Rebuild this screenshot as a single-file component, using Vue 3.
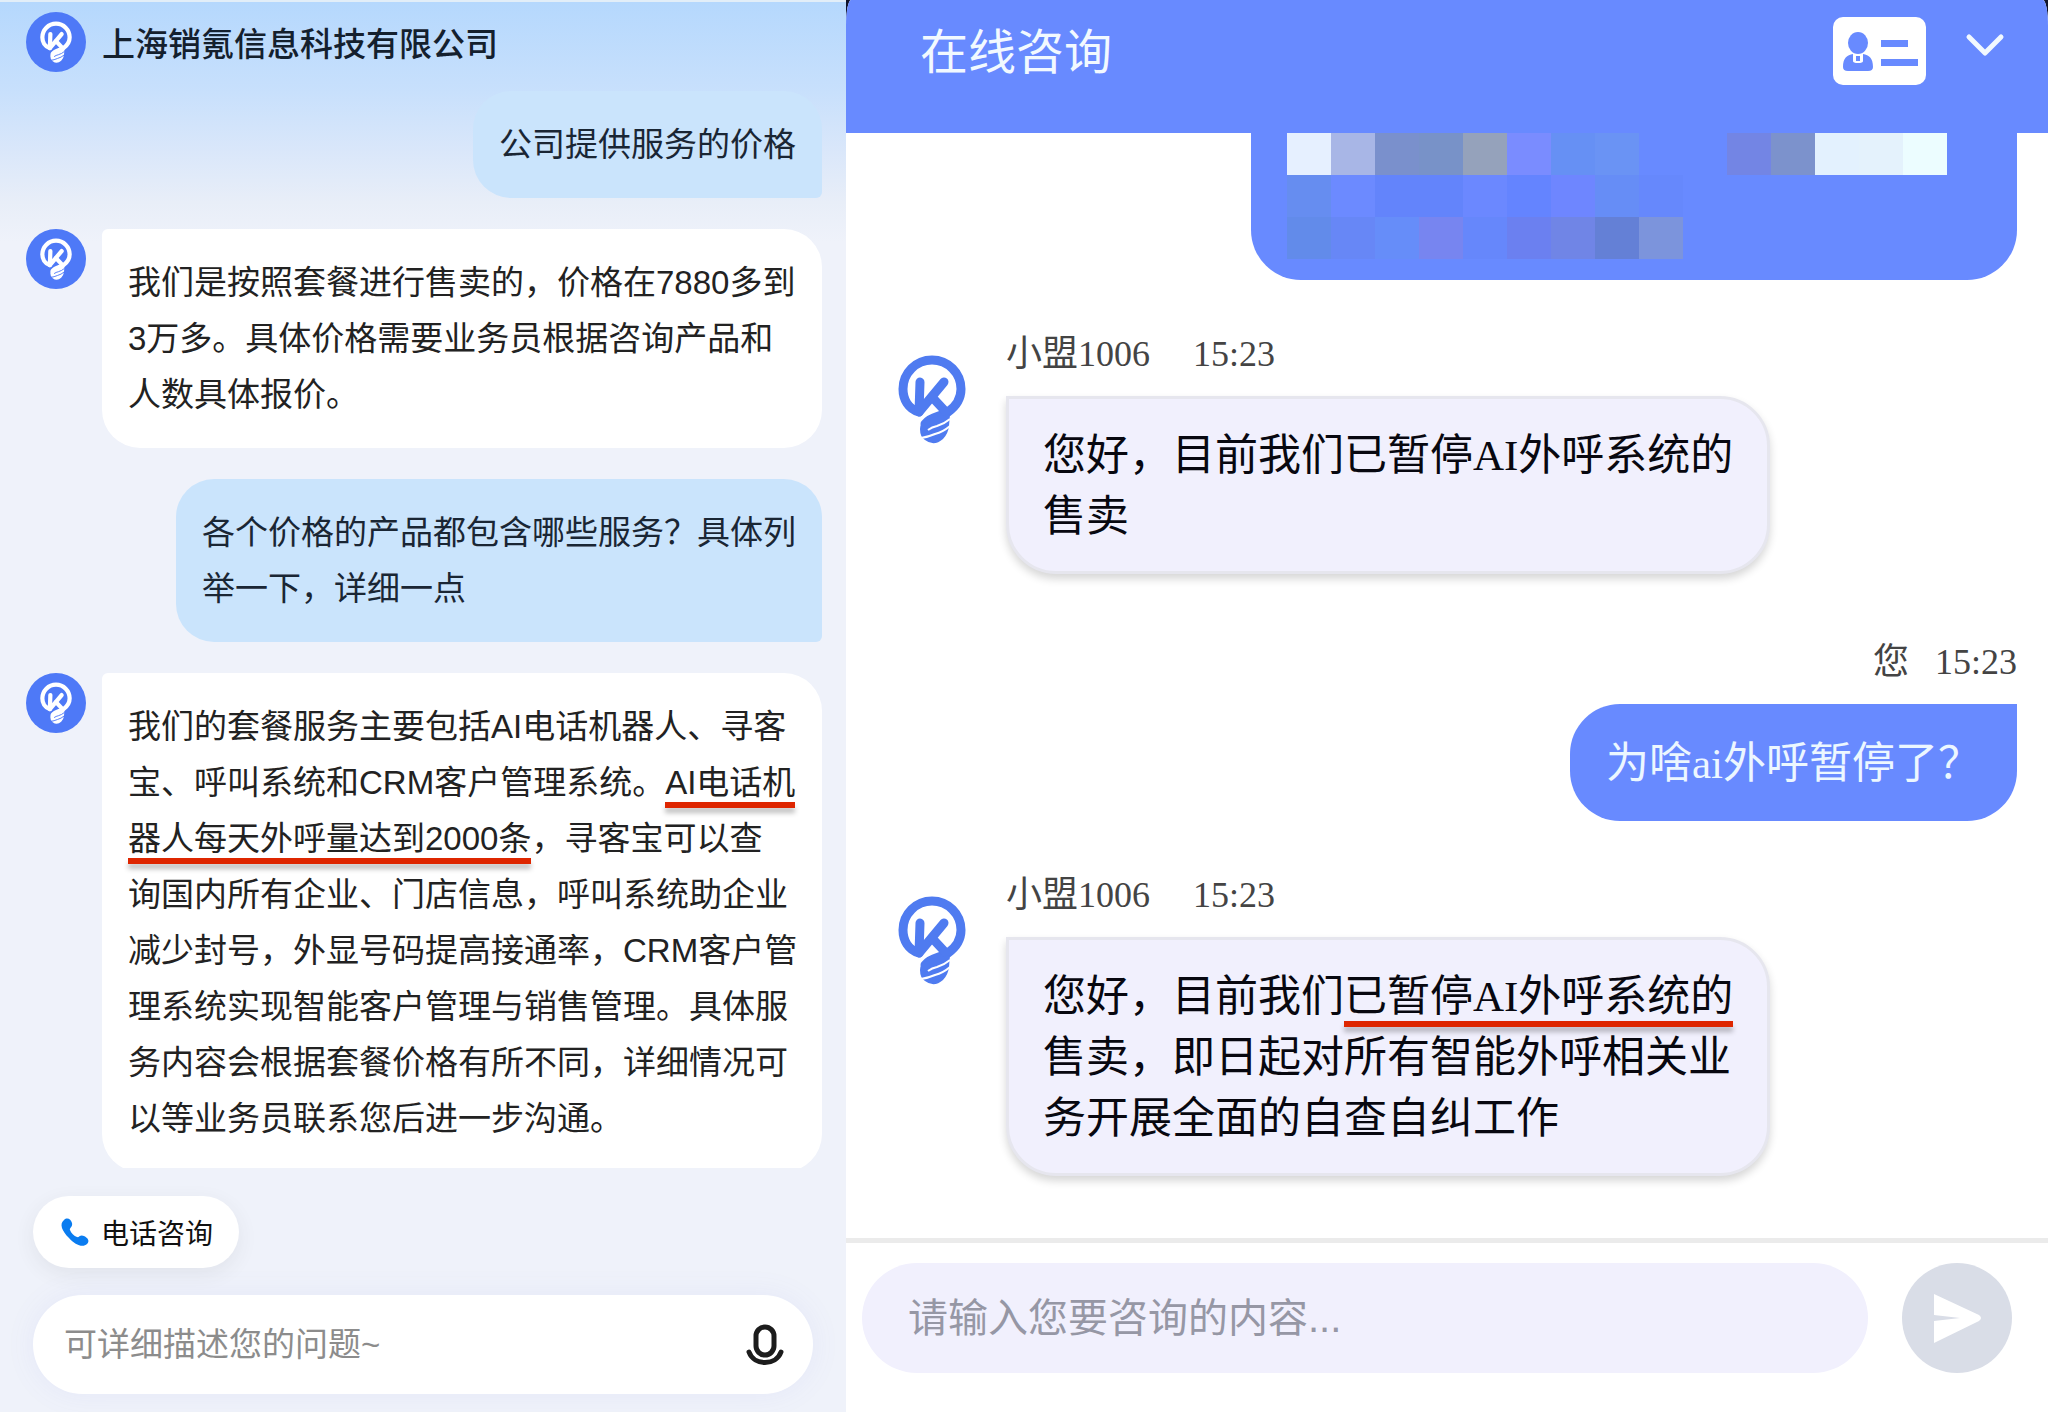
<template>
    <div class="page">
        <svg class="symbols" aria-hidden="true">
            <symbol id="bulb" viewBox="0 0 68 90">
                <g fill="none" stroke="currentColor" stroke-width="9" stroke-linecap="round" stroke-linejoin="round">
                    <path d="M21 57 C10 54 5 44 5 34 A29 29 0 0 1 63 34 C63 45 57 52 50 57 C43 62 33 61 27 69" />
                    <path d="M22 27 L21 57 L46 27" />
                    <path d="M34 42 L48 57" />
                </g>
                <path fill="currentColor" d="M22 74 C22 66 30 64 38 62 L52 59 L51 71 Q50 79 45 84 Q36 92 27 85 Q22 82 22 74Z" />
                <path class="stripe" d="M30 75 Q34 72 39 71 Q46 69 52 64" />
                <path class="stripe" d="M23 83 Q30 82 37 79 Q45 77 52 71" />
            </symbol>
        </svg>

        <section class="panel assistant">
            <header class="assistant-header">
                <span class="avatar"><svg class="avatar-logo"><use href="#bulb" /></svg></span>
                <h1 class="company">上海销氪信息科技有限公司</h1>
            </header>

            <main class="assistant-chat">
                <div v-for="(message, i) in assistantMessages" :key="i" class="row" :class="message.from">
                    <span v-if="message.from === 'bot'" class="avatar">
                        <svg class="avatar-logo"><use href="#bulb" /></svg>
                    </span>
                    <p class="bubble">
                        <span v-for="(part, j) in message.parts" :key="j" :class="{ marked: part.marked }">{{ part.text }}</span>
                    </p>
                </div>
            </main>

            <footer class="assistant-footer">
                <button type="button" class="phone-button">
                    <svg class="phone-icon" viewBox="0 0 28 28">
                        <path d="M3 2 C6 -1 10 1 11 5 C12 9 8 10 9 12 C10 15 13 18 16 19 C18 20 19 16 23 18 C27 20 29 23 26 26 C22 30 14 27 8 20 C1 13 -2 6 3 2Z" />
                    </svg>
                    电话咨询
                </button>
                <div class="ask-box">
                    <input v-model="question" class="ask-input" type="text" placeholder="可详细描述您的问题~" aria-label="问题" />
                    <button type="button" class="mic-button" aria-label="语音输入">
                        <svg class="mic-icon" viewBox="0 0 38 42">
                            <rect x="10" y="3" width="18" height="28" rx="9" />
                            <path d="M3 28 C8 42 30 42 35 28" />
                        </svg>
                    </button>
                </div>
            </footer>
        </section>

        <section class="panel online">
            <header class="online-header">
                <h2 class="online-title">在线咨询</h2>
                <button type="button" class="icon-button" aria-label="名片">
                    <svg class="card-icon" viewBox="0 0 93 68">
                        <rect width="93" height="68" rx="10" fill="#fff" />
                        <g fill="#688aff">
                            <ellipse cx="25" cy="26" rx="10" ry="11" />
                            <path d="M10 50 C10 41 14 38 20 37 V44 Q20 46 25 46 Q30 46 30 44 V37 C36 38 40 41 40 50 Q40 54 35 54 H15 Q10 54 10 50Z" />
                            <rect x="23" y="39" width="4" height="5" />
                            <rect x="48" y="23" width="27" height="7" />
                            <rect x="48" y="42" width="37" height="7" />
                        </g>
                    </svg>
                </button>
                <button type="button" class="icon-button" aria-label="收起">
                    <svg class="chevron-icon" viewBox="0 0 38 24">
                        <path d="M3 3 L19 19 L35 3" />
                    </svg>
                </button>
            </header>

            <main class="online-chat">
                <div class="hidden-bubble">
                    <div v-for="(cells, i) in mosaic" :key="i" class="mosaic-row">
                        <span v-for="(color, j) in cells" :key="j" class="mosaic-cell" :style="{ background: color }"></span>
                    </div>
                </div>

                <div v-for="(message, i) in onlineMessages" :key="i" class="talk" :class="message.from">
                    <svg v-if="message.from === 'bot'" class="talk-logo"><use href="#bulb" /></svg>
                    <div class="talk-body">
                        <div class="talk-meta">
                            <span>{{ message.name }}</span>
                            <time>{{ message.time }}</time>
                        </div>
                        <p class="talk-bubble">
                            <span v-for="(part, j) in message.parts" :key="j" :class="{ marked: part.marked }">{{ part.text }}</span>
                        </p>
                    </div>
                </div>
            </main>

            <footer class="online-footer">
                <input v-model="inquiry" class="online-input" type="text" placeholder="请输入您要咨询的内容..." aria-label="咨询内容" />
                <button type="button" class="send-button" aria-label="发送">
                    <svg class="send-icon" viewBox="0 0 50 50">
                        <path d="M2 1 L47 22 Q51 25 47 28 L2 50 V28 L28 25 L2 22Z" />
                    </svg>
                </button>
            </footer>
        </section>
    </div>
</template>

<script setup>
import { ref } from 'vue';

const question = ref('');
const inquiry = ref('');

const assistantMessages = [
    {
        from: 'user',
        parts: [{ text: '公司提供服务的价格' }]
    },
    {
        from: 'bot',
        parts: [{ text: '我们是按照套餐进行售卖的，价格在7880多到\n3万多。具体价格需要业务员根据咨询产品和\n人数具体报价。' }]
    },
    {
        from: 'user',
        parts: [{ text: '各个价格的产品都包含哪些服务？具体列\n举一下，详细一点' }]
    },
    {
        from: 'bot',
        parts: [
            { text: '我们的套餐服务主要包括AI电话机器人、寻客\n' },
            { text: '宝、呼叫系统和CRM客户管理系统。' },
            { text: 'AI电话机', marked: true },
            { text: '\n' },
            { text: '器人每天外呼量达到2000条', marked: true },
            { text: '，寻客宝可以查\n' },
            { text: '询国内所有企业、门店信息，呼叫系统助企业\n减少封号，外显号码提高接通率，CRM客户管\n理系统实现智能客户管理与销售管理。具体服\n务内容会根据套餐价格有所不同，详细情况可\n以等业务员联系您后进一步沟通。' }
        ]
    }
];

const onlineMessages = [
    {
        from: 'bot',
        name: '小盟1006',
        time: '15:23',
        parts: [{ text: '您好，目前我们已暂停AI外呼系统的\n售卖' }]
    },
    {
        from: 'user',
        name: '您',
        time: '15:23',
        parts: [{ text: '为啥ai外呼暂停了？' }]
    },
    {
        from: 'bot',
        name: '小盟1006',
        time: '15:23',
        parts: [
            { text: '您好，目前我们' },
            { text: '已暂停AI外呼系统的', marked: true },
            { text: '\n' },
            { text: '售卖，即日起对所有智能外呼相关业\n务开展全面的自查自纠工作' }
        ]
    }
];

const mosaic = [
    ['#e6f0ff', '#a8b6e6', '#7a90cc', '#7892c8', '#95a2bb', '#7a8cff', '#6690f4', '#6a93f4', '#688aff', '#688aff', '#7385e4', '#7c92cc', '#e3f1fe', '#e4f2fc', '#ecfdff'],
    ['#668df0', '#6c8aff', '#6384fb', '#6384fb', '#6b88ff', '#6484ff', '#6e86ff', '#668df6', '#6688fc'],
    ['#628bea', '#6787f6', '#668df9', '#7785f0', '#6687fb', '#6b80f0', '#7085e6', '#6480d6', '#7c94dc']
];
</script>

<style>
body {
    margin: 0;
}
</style>

<style scoped>
.page {
    display: grid;
    grid-template-columns: 846fr 1202fr;
    height: 100vh;
    overflow: hidden;
    background: #10142c;
    font-family: "Liberation Sans", "Noto Sans CJK SC", sans-serif;
}

.page * {
    box-sizing: border-box;
}

.symbols {
    position: absolute;
    width: 0;
    height: 0;
}

.stripe {
    fill: none;
    stroke: var(--stripe);
    stroke-width: 2;
}

.panel {
    display: flex;
    flex-direction: column;
    min-width: 0;
    min-height: 0;
}

h1,
h2,
p {
    margin: 0;
    font-weight: 400;
}

button {
    border: 0;
    padding: 0;
    background: none;
    font-family: inherit;
    cursor: pointer;
}

input {
    border: 0;
    outline: 0;
    min-width: 0;
    font-family: inherit;
}

svg {
    display: block;
    overflow: visible;
}

.marked {
    position: relative;
}

.marked::after {
    content: "";
    position: absolute;
    left: 0;
    right: 0;
    bottom: -7px;
    height: 6px;
    background: #de2600;
    box-shadow: 0 5px 5px rgba(0, 0, 0, 0.25);
}

/* left panel */
.assistant {
    border-top: 2px solid #e2eef8;
    background: linear-gradient(#b5d8fd 0, #c8e0fc 90px, #dae7fa 150px, #e8eef8 200px, #eff2fa 240px);
    color: #222;
}

.assistant-header {
    display: flex;
    align-items: center;
    gap: 16px;
    padding: 10px 26px 19px;
}

.company {
    padding-top: 6px;
    color: #14202e;
    font-size: 33px;
    font-weight: 500;
    line-height: 54px;
}

.avatar {
    --stripe: #4e79f7;
    display: flex;
    flex: none;
    align-items: center;
    justify-content: center;
    width: 60px;
    height: 60px;
    border-radius: 50%;
    background: #4e79f7;
    color: #fff;
}

.avatar-logo {
    width: 32px;
    height: 43px;
}

.assistant-chat {
    display: flex;
    flex: 1;
    flex-direction: column;
    gap: 31px;
    min-height: 0;
    padding: 0 24px 0 26px;
    overflow: hidden;
}

.row {
    display: flex;
    flex: none;
    align-items: flex-start;
    gap: 16px;
}

.row.user {
    justify-content: flex-end;
}

.bubble {
    padding: 26px 26px 25px;
    border-radius: 38px;
    font-size: 33px;
    line-height: 56px;
    white-space: pre;
}

.bot .bubble {
    flex: 1;
    min-width: 0;
    border-top-left-radius: 6px;
    background: #fff;
}

.user .bubble {
    border-bottom-right-radius: 6px;
    background: #cae4fc;
    color: #1a2634;
}

.assistant-footer {
    display: flex;
    flex: none;
    flex-direction: column;
    align-items: flex-start;
    gap: 27px;
    padding: 28px 33px 18px;
}

.phone-button {
    display: flex;
    align-items: center;
    gap: 12px;
    height: 72px;
    padding: 0 26px 0 28px;
    border-radius: 36px;
    background: #fff;
    box-shadow: 0 6px 20px rgba(60, 60, 60, 0.08);
    color: #111;
    font-size: 28px;
}

.phone-icon {
    width: 28px;
    height: 28px;
    fill: #0a7cf0;
}

.ask-box {
    display: flex;
    align-items: center;
    align-self: stretch;
    height: 99px;
    padding: 0 29px 0 31px;
    border-radius: 50px;
    background: #fff;
    box-shadow: 0 0 30px rgba(120, 120, 220, 0.08);
}

.ask-input {
    flex: 1;
    height: 56px;
    padding: 0;
    background: none;
    font-size: 33px;
}

.ask-input::placeholder {
    color: #8c8c8c;
}

.mic-icon {
    width: 38px;
    height: 42px;
    fill: none;
    stroke: #1c1c1c;
    stroke-width: 5;
    stroke-linecap: round;
}

/* right panel */
.online {
    border-radius: 5px 5px 0 0 / 26px 26px 0 0;
    background: #fff;
    font-family: "Liberation Serif", "Noto Sans CJK SC", serif;
    overflow: hidden;
}

.online-header {
    display: flex;
    flex: none;
    align-items: flex-start;
    height: 133px;
    padding: 17px 44px 0 74px;
    background: #688aff;
}

.online-title {
    flex: 1;
    color: #f2f9ff;
    font-size: 48px;
    line-height: 72px;
}

.card-icon {
    width: 93px;
    height: 68px;
}

.chevron-icon {
    width: 38px;
    height: 24px;
    margin: 17px 0 0 40px;
    fill: none;
    stroke: #f2f9ff;
    stroke-width: 5;
    stroke-linecap: round;
    stroke-linejoin: round;
}

.online-chat {
    display: flex;
    flex: 1;
    flex-direction: column;
    gap: 48px;
    min-height: 0;
    padding: 0 31px 0 52px;
    overflow: hidden;
}

.hidden-bubble {
    flex: none;
    align-self: flex-end;
    width: 766px;
    padding: 0 36px 21px;
    border-radius: 0 0 50px 50px;
    background: #688aff;
}

.mosaic-row {
    display: flex;
    height: 42px;
}

.mosaic-cell {
    width: 44px;
}

.talk {
    display: flex;
    flex: none;
    gap: 40px;
}

.talk.bot {
    padding-bottom: 14px;
}

.talk.user {
    justify-content: flex-end;
}

.talk-logo {
    --stripe: #fff;
    flex: none;
    width: 68px;
    height: 90px;
    margin-top: 27px;
    color: #4f7bf0;
}

.talk-meta {
    display: flex;
    gap: 43px;
    margin-bottom: 16px;
    color: #444;
    font-size: 36px;
    line-height: 52px;
}

.user .talk-meta {
    justify-content: flex-end;
    gap: 26px;
}

.talk-bubble {
    padding: 29px 36px 27px;
    font-size: 43px;
    line-height: 61px;
    white-space: pre;
}

.bot .talk-bubble {
    padding: 26px 34px 24px;
    border: 3px solid #e6e6ee;
    border-radius: 0 50px 50px 50px;
    background: #f1f0fd;
    box-shadow: 0 5px 8px rgba(0, 0, 0, 0.16);
    color: #080810;
}

.user .talk-bubble {
    border-radius: 50px 0 50px 50px;
    background: #688aff;
    color: #ecf7ff;
}

.online-footer {
    display: flex;
    flex: none;
    align-items: center;
    gap: 34px;
    padding: 20px 36px 39px 16px;
    border-top: 5px solid #ebebeb;
}

.online-input {
    flex: 1;
    height: 110px;
    padding: 0 46px;
    border-radius: 55px;
    background: #f1f0fd;
    font-family: "Liberation Sans", "Noto Sans CJK SC", sans-serif;
    font-size: 40px;
}

.online-input::placeholder {
    color: #9697a5;
}

.send-button {
    display: flex;
    align-items: center;
    justify-content: center;
    width: 110px;
    height: 110px;
    border-radius: 50%;
    background: #d9dde7;
}

.send-icon {
    width: 50px;
    height: 50px;
    fill: #fff;
}
</style>
